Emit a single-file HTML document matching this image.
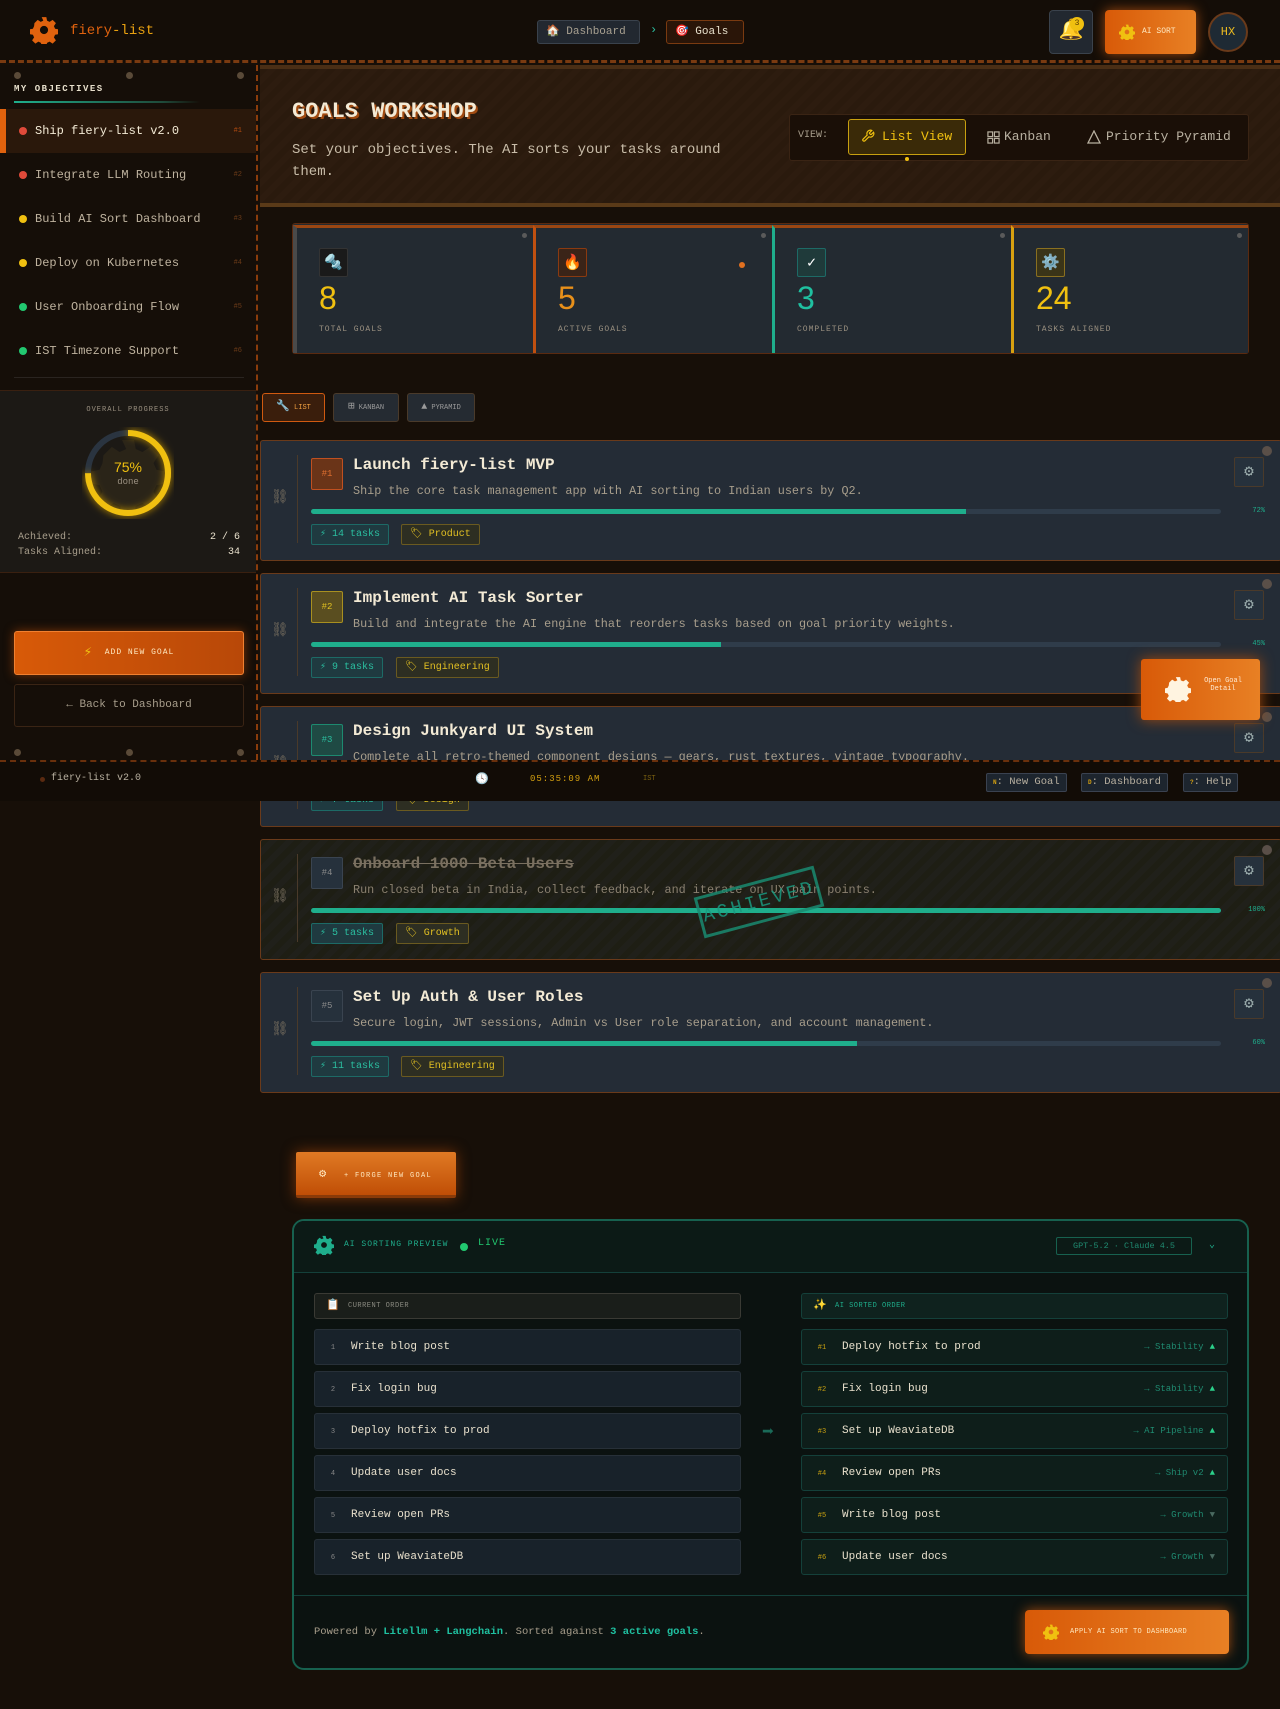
<!DOCTYPE html>
<html><head><meta charset="utf-8">
<style>
*{box-sizing:border-box;margin:0;padding:0}
body{width:1280px;height:1709px;position:relative;overflow:hidden;background:#170f08;font-family:"Liberation Mono","DejaVu Sans Mono",monospace;color:#d8cdb8}
.a{position:absolute;white-space:nowrap}
.hdr{left:0;top:0;width:1280px;height:63px;background:#140d07;border-bottom:3px dashed #7a3a10}
.crumb{height:24px;top:20px;border-radius:3px;font-size:11px;line-height:22px;padding:0 8px}
.side{left:0;top:65px;width:258px;height:695px;background:#150e08;border-right:2px dashed #8a3c0c}
.rv{width:7px;height:7px;border-radius:50%;background:#5a4a38}
.item{left:0;width:256px;height:44px;font-size:12px;line-height:44px;padding-left:35px;color:#bfb39f}
.item .d{position:absolute;left:19px;top:18px;width:8px;height:8px;border-radius:50%}
.item .n{position:absolute;right:14px;top:0;font-size:7px;color:#6a3a18}
.hero{left:260px;top:65px;width:1020px;height:142px;background:repeating-linear-gradient(135deg,#2a1a0d 0 6px,#2d1c0f 6px 12px);border-top:4px solid #4a2e15;border-bottom:4px solid #5a3a18}
.stat{top:225px;height:128px;background:#232a31;border-top:3px solid #9a4612}
.stat .ic{position:absolute;left:22px;top:20px;width:29px;height:29px;border-radius:2px;font-size:15px;text-align:center;line-height:29px}
.stat .v{position:absolute;left:22px;top:52px;font-size:32px;font-family:"Liberation Sans",sans-serif}
.stat .l{position:absolute;left:22px;top:97px;font-size:8px;letter-spacing:1px;color:#9a9080}
.stat .r{position:absolute;right:6px;top:5px;width:5px;height:5px;border-radius:50%;background:#5a5a5a}
.tab{top:393px;height:29px;border-radius:3px;font-size:7px;line-height:27px;text-align:center;background:#252b32;border:1px solid #4a3a2a;color:#9a9a9a}
.card{left:260px;width:1022px;height:121px;background:#242c36;border:1px solid #6a3a1a;border-radius:3px}
.card .ch{position:absolute;left:10px;top:48px;font-size:14px;color:#7a7060}
.card .vl{position:absolute;left:36px;top:14px;width:1px;height:88px;background:#4a3a2a}
.card .bd{position:absolute;left:50px;top:17px;width:32px;height:32px;border-radius:2px;font-size:9px;text-align:center;line-height:30px}
.card .t{position:absolute;left:92px;top:15px;font-size:16px;font-weight:bold;color:#f3ead5}
.card .ds{position:absolute;left:92px;top:43px;font-size:11.8px;color:#a89e8c}
.card .pb{position:absolute;left:50px;top:68px;width:910px;height:5px;background:#2f3c4a;border-radius:3px;overflow:hidden}
.card .pb i{display:block;height:5px;background:#1fae8c}
.card .pc{position:absolute;right:16px;top:66px;font-size:7px;color:#1fae8c}
.card .tg{position:absolute;top:83px;height:21px;font-size:10px;line-height:19px;padding:0 8px;border-radius:2px}
.tg.k{left:50px;border:1px solid #1d6a66;background:#1f3a40;color:#2bbfa0}
.tg.c{border:1px solid #6a5a20;background:#2d2e22;color:#e2c022}
.card .gb{position:absolute;left:973px;top:16px;width:30px;height:30px;border:1px solid #4a3a2a;background:#26313c;border-radius:2px;color:#9aa;text-align:center;line-height:28px;font-size:16px}
.card .rt{position:absolute;left:1001px;top:5px;width:10px;height:10px;border-radius:50%;background:#5a4f48}
.ft{left:0;top:760px;width:1280px;height:41px;background:#120c06;border-top:2px dashed #6a300c}
.kb{top:11px;height:19px;font-size:10.5px;line-height:17px;padding:0 6px;background:#1d252e;border:1px solid #3a4250;border-radius:2px;color:#b8b0a0}
.kb b{color:#d4a010;font-size:6px}
.ai{left:292px;top:1219px;width:957px;height:451px;background:#0b1210;border:2px solid #17614f;border-radius:12px;overflow:hidden}
.row{height:36px;border-radius:3px;font-size:11px;line-height:34px}
.row.l{background:#18222a;border:1px solid #273038;color:#e8e0cc}
.row.r{background:#0e1e1a;border:1px solid #14403a;color:#e8e0cc}
.row .n{display:inline-block;width:36px;text-align:center;font-size:7px;color:#888}
.row.r .n{color:#c8a010;width:40px}
.row .tg2{position:absolute;right:12px;top:0;font-size:9px;color:#1f8a70}
.row .tg2 b{color:#2bd08a;margin-left:6px;font-size:9px}
</style></head><body>
<svg width="0" height="0" style="position:absolute"><defs><path id="g" d="M10 1h4l.6 3 2.2 1 2.6-1.7 2.8 2.8-1.7 2.6 1 2.2 3 .6v4l-3 .6-1 2.2 1.7 2.6-2.8 2.8-2.6-1.7-2.2 1-.6 3h-4l-.6-3-2.2-1-2.6 1.7-2.8-2.8 1.7-2.6-1-2.2-3-.6v-4l3-.6 1-2.2L3.8 6.1l2.8-2.8 2.6 1.7 2.2-1z"/></defs></svg>

<div class="a hdr">
  <svg class="a" style="left:30px;top:16px" width="28" height="28" viewBox="0 0 24 24"><use href="#g" fill="#e0620e"/><circle cx="12" cy="12" r="3.5" fill="#140d07"/></svg>
  <div class="a" style="left:70px;top:23px;font-size:14px;color:#e0620e">fiery<span style="color:#e8a010">-list</span></div>
  <div class="a crumb" style="left:537px;width:103px;background:#222830;border:1px solid #3a424c;color:#a8a090"><span style="font-size:11px">🏠</span> Dashboard</div>
  <div class="a" style="left:650px;top:23px;font-size:12px;color:#2bbfa0">›</div>
  <div class="a crumb" style="left:666px;width:78px;background:#2a1508;border:1px solid #7a3a10;color:#e8e0cc"><span style="font-size:11px">🎯</span> Goals</div>
  <div class="a" style="left:1049px;top:10px;width:44px;height:44px;background:#222830;border:1px solid #3a424c;border-radius:4px;font-size:20px;text-align:center;line-height:42px">🔔</div>
  <div class="a" style="left:1070px;top:17px;width:14px;height:14px;border-radius:50%;background:#f0c010;font-size:8px;color:#5a3a00;text-align:center;line-height:14px">3</div>
  <div class="a" style="left:1105px;top:10px;width:91px;height:44px;background:linear-gradient(90deg,#d85a08,#e88024);border-radius:4px;box-shadow:0 0 12px #a04a10;font-size:8px;color:#ffe8c0;line-height:44px;padding-left:37px">AI SORT</div>
  <svg class="a" style="left:1119px;top:24px" width="16" height="16" viewBox="0 0 24 24"><use href="#g" fill="#f0c010"/><circle cx="12" cy="12" r="3.5" fill="#e07018"/></svg>
  <div class="a" style="left:1208px;top:12px;width:40px;height:40px;border-radius:50%;background:#1e2a34;border:2px solid #6a3a1a;color:#e8b820;font-size:12px;text-align:center;line-height:36px">HX</div>
</div>

<div class="a side">
  <div class="a rv" style="left:14px;top:7px"></div><div class="a rv" style="left:126px;top:7px"></div><div class="a rv" style="left:237px;top:7px"></div>
  <div class="a" style="left:14px;top:19px;font-size:9px;font-weight:bold;letter-spacing:1.5px;color:#e8e0cc">MY OBJECTIVES</div>
  <div class="a" style="left:14px;top:36px;width:186px;height:2px;background:linear-gradient(90deg,#1fae8c,#1f4a3a 80%,transparent)"></div>
  <div class="a item" style="top:44px;background:#2a180b;color:#f3ead5;border-left:6px solid #e0620e;padding-left:29px"><span class="d" style="background:#e04a3a;left:13px"></span>Ship fiery-list v2.0<span class="n" style="color:#b04a10">#1</span></div>
  <div class="a item" style="top:88px"><span class="d" style="background:#e04a3a"></span>Integrate LLM Routing<span class="n">#2</span></div>
  <div class="a item" style="top:132px"><span class="d" style="background:#f0c010"></span>Build AI Sort Dashboard<span class="n">#3</span></div>
  <div class="a item" style="top:176px"><span class="d" style="background:#f0c010"></span>Deploy on Kubernetes<span class="n">#4</span></div>
  <div class="a item" style="top:220px"><span class="d" style="background:#22c870"></span>User Onboarding Flow<span class="n">#5</span></div>
  <div class="a item" style="top:264px"><span class="d" style="background:#22c870"></span>IST Timezone Support<span class="n">#6</span></div>
  <div class="a" style="left:14px;top:312px;width:230px;height:1px;background:#2a2420"></div>
  <div class="a" style="left:0;top:325px;width:256px;height:183px;background:#1c1915;border-top:1px solid #3a2010;border-bottom:1px solid #3a2010">
    <div class="a" style="left:0;width:256px;top:15px;text-align:center;font-size:7px;letter-spacing:1px;color:#9a9080">OVERALL PROGRESS</div>
    <svg class="a" style="left:82px;top:36px" width="92" height="92" viewBox="0 0 92 92"><g transform="translate(46 46) scale(3) translate(-12 -12)"><use href="#g" fill="#2a2418"/></g><circle cx="46" cy="46" r="40" fill="none" stroke="#2a3440" stroke-width="6"/><circle cx="46" cy="46" r="40" fill="none" stroke="#f0c010" stroke-width="6" stroke-dasharray="188 252" transform="rotate(-90 46 46)" style="filter:drop-shadow(0 0 4px #c09000)"/></svg>
    <div class="a" style="left:0;width:256px;top:68px;text-align:center;font-size:14px;color:#f0c010;font-family:'Liberation Sans',sans-serif">75%</div>
    <div class="a" style="left:0;width:256px;top:86px;text-align:center;font-size:9px;color:#9a9080">done</div>
    <div class="a" style="left:18px;top:141px;font-size:10px;color:#a89e8c">Achieved:</div><div class="a" style="right:16px;top:141px;font-size:10px;color:#e8e0cc">2 / 6</div>
    <div class="a" style="left:18px;top:156px;font-size:10px;color:#a89e8c">Tasks Aligned:</div><div class="a" style="right:16px;top:156px;font-size:10px;color:#e8e0cc">34</div>
  </div>
  <div class="a" style="left:14px;top:566px;width:230px;height:44px;background:linear-gradient(90deg,#d85a08,#b84808);border:1px solid #f08030;border-radius:3px;box-shadow:0 0 10px #7a3408;font-size:8px;letter-spacing:1px;color:#ffe8c0;text-align:center;line-height:42px"><span style="color:#f0c010;font-size:14px;vertical-align:-2px">⚡</span>&nbsp;&nbsp;ADD NEW GOAL</div>
  <div class="a" style="left:14px;top:619px;width:230px;height:43px;border:1px solid #3a2414;border-radius:3px;font-size:11px;color:#a89e8c;text-align:center;line-height:41px">← Back to Dashboard</div>
  <div class="a rv" style="left:14px;top:684px"></div><div class="a rv" style="left:126px;top:684px"></div><div class="a rv" style="left:237px;top:684px"></div>
</div>

<div class="a hero">
  <div class="a" style="left:32px;top:30px;font-size:22px;font-weight:bold;color:#f3ead5;text-shadow:2px 2px 0 #a04a10">GOALS WORKSHOP</div>
  <div class="a" style="left:32px;top:70px;width:460px;font-size:14px;line-height:22px;color:#c8bca8;white-space:normal">Set your objectives. The AI sorts your tasks around them.</div>
  <div class="a" style="left:529px;top:45px;width:460px;height:47px;background:#1a0f07;border:1px solid #3a2414;border-radius:3px">
    <div class="a" style="left:8px;top:15px;font-size:10px;color:#a89e8c">VIEW:</div>
    <div class="a" style="left:58px;top:4px;width:118px;height:36px;background:#3a2a08;border:1px solid #c8a010;border-radius:3px;color:#f0c010;font-size:13px;line-height:34px;padding-left:33px">List View</div>
    <svg class="a" style="left:71px;top:14px" width="14" height="14" viewBox="0 0 24 24" fill="none" stroke="#f0c010" stroke-width="2"><path d="M14.7 6.3a1 1 0 0 0 0 1.4l1.6 1.6a1 1 0 0 0 1.4 0l3.8-3.8a6 6 0 0 1-7.9 7.9l-6.9 6.9a2.1 2.1 0 0 1-3-3l6.9-6.9a6 6 0 0 1 7.9-7.9z"/></svg>
    <div class="a" style="left:115px;top:42px;width:4px;height:4px;border-radius:50%;background:#f0c010"></div>
    <svg class="a" style="left:197px;top:16px" width="13" height="13" viewBox="0 0 14 14" fill="none" stroke="#b8b0a0" stroke-width="1.3"><rect x="1" y="1" width="5" height="5"/><rect x="8" y="1" width="5" height="5"/><rect x="1" y="8" width="5" height="5"/><rect x="8" y="8" width="5" height="5"/></svg>
    <div class="a" style="left:214px;top:14px;font-size:13px;color:#b8b0a0">Kanban</div>
    <svg class="a" style="left:297px;top:15px" width="14" height="14" viewBox="0 0 14 14" fill="none" stroke="#b8b0a0" stroke-width="1.3"><path d="M7 1L13 13H1z"/></svg>
    <div class="a" style="left:316px;top:14px;font-size:13px;color:#b8b0a0">Priority Pyramid</div>
  </div>
</div>

<div class="a" style="left:292px;top:223px;width:957px;height:131px;border:1px solid #5a2a10;border-radius:3px;background:#232a31"></div>
<div class="a stat" style="left:293px;width:240px;border-left:4px solid #4a4a4a"><div class="ic" style="background:#1a1a1a;border:1px solid #333">🔩</div><div class="v" style="color:#f0c010">8</div><div class="l">TOTAL GOALS</div><div class="r"></div></div>
<div class="a stat" style="left:533px;width:239px;border-left:3px solid #c05010"><div class="ic" style="background:#3a2418;border:1px solid #8a3a10">🔥</div><div class="v" style="color:#e8901a">5</div><div class="l">ACTIVE GOALS</div><div class="r"></div><div class="a" style="left:203px;top:34px;width:6px;height:6px;border-radius:50%;background:#e07020"></div></div>
<div class="a stat" style="left:772px;width:239px;border-left:3px solid #1fae8c"><div class="ic" style="background:#1f3a3a;border:1px solid #1d6a66;color:#fff">✓</div><div class="v" style="color:#1fc0a0">3</div><div class="l">COMPLETED</div><div class="r"></div></div>
<div class="a stat" style="left:1011px;width:237px;border-left:3px solid #d8a010"><div class="ic" style="background:#3a3418;border:1px solid #8a7020">⚙️</div><div class="v" style="color:#f0c010">24</div><div class="l">TASKS ALIGNED</div><div class="r"></div></div>

<div class="a tab" style="left:262px;width:63px;background:#3a1e0c;border-color:#d05a10;color:#f0a040"><span style="font-size:11px">🔧</span>&nbsp;LIST</div>
<div class="a tab" style="left:333px;width:66px"><span style="font-size:11px">⊞</span>&nbsp;KANBAN</div>
<div class="a tab" style="left:407px;width:68px"><span style="font-size:10px">▲</span>&nbsp;PYRAMID</div>

<div class="a card" style="top:440px"><span class="ch">⛓</span><span class="vl"></span><div class="bd" style="background:#6a3418;border:1px solid #c05020;color:#e07030">#1</div><div class="t">Launch fiery-list MVP</div><div class="ds">Ship the core task management app with AI sorting to Indian users by Q2.</div><div class="pb"><i style="width:72%"></i></div><div class="pc">72%</div><div class="tg k">⚡ 14 tasks</div><div class="tg c" style="left:140px">🏷 Product</div><div class="gb">⚙</div><div class="rt"></div></div>
<div class="a card" style="top:573px"><span class="ch">⛓</span><span class="vl"></span><div class="bd" style="background:#5a4e20;border:1px solid #a89020;color:#e0c020">#2</div><div class="t">Implement AI Task Sorter</div><div class="ds">Build and integrate the AI engine that reorders tasks based on goal priority weights.</div><div class="pb"><i style="width:45%"></i></div><div class="pc">45%</div><div class="tg k">⚡ 9 tasks</div><div class="tg c" style="left:135px">🏷 Engineering</div><div class="gb">⚙</div><div class="rt"></div></div>
<div class="a card" style="top:706px"><span class="ch">⛓</span><span class="vl"></span><div class="bd" style="background:#1f4a44;border:1px solid #1d8a70;color:#2bbfa0">#3</div><div class="t">Design Junkyard UI System</div><div class="ds">Complete all retro-themed component designs — gears, rust textures, vintage typography.</div><div class="pb"><i style="width:30%"></i></div><div class="tg k">⚡ 7 tasks</div><div class="tg c" style="left:135px">🏷 Design</div><div class="gb">⚙</div><div class="rt"></div></div>
<div class="a card" style="top:839px;background:repeating-linear-gradient(135deg,#1e1e14 0 6px,#20201a 6px 12px)"><span class="ch">⛓</span><span class="vl"></span><div class="bd" style="background:#26313c;border:1px solid #3a4450;color:#8a8a8a">#4</div><div class="t" style="color:#7a7060;text-decoration:line-through">Onboard 1000 Beta Users</div><div class="ds" style="color:#8a8070">Run closed beta in India, collect feedback, and iterate on UX pain points.</div><div class="pb"><i style="width:100%"></i></div><div class="pc">100%</div><div class="tg k">⚡ 5 tasks</div><div class="tg c" style="left:135px">🏷 Growth</div><div class="gb">⚙</div><div class="rt"></div>
  <div class="a" style="left:436px;top:41px;width:124px;height:42px;border:3px solid #1a8a70;color:#1a9a80;font-size:19px;letter-spacing:3px;text-align:center;line-height:36px;transform:rotate(-15deg);opacity:.85">ACHIEVED</div></div>
<div class="a card" style="top:972px"><span class="ch">⛓</span><span class="vl"></span><div class="bd" style="background:#26313c;border:1px solid #3a4450;color:#8a8a8a">#5</div><div class="t">Set Up Auth &amp; User Roles</div><div class="ds">Secure login, JWT sessions, Admin vs User role separation, and account management.</div><div class="pb"><i style="width:60%"></i></div><div class="pc">60%</div><div class="tg k">⚡ 11 tasks</div><div class="tg c" style="left:140px">🏷 Engineering</div><div class="gb">⚙</div><div class="rt"></div></div>

<div class="a" style="left:1141px;top:659px;width:119px;height:61px;background:linear-gradient(90deg,#d85a08,#e88024);border-radius:3px;box-shadow:0 0 14px #a04a10">
  <svg class="a" style="left:24px;top:17px" width="26" height="26" viewBox="0 0 24 24"><use href="#g" fill="#fff4e0"/></svg>
  <div class="a" style="left:60px;top:18px;width:44px;text-align:center;font-size:7px;line-height:8px;color:#ffe8d0;white-space:normal">Open Goal Detail</div>
</div>

<div class="a ft">
  <div class="a" style="left:40px;top:15px;width:5px;height:5px;border-radius:50%;background:#5a2a10"></div>
  <div class="a" style="left:51px;top:11px;font-size:10px;color:#b8b0a0">fiery-list v2.0</div>
  <div class="a" style="left:475px;top:10px;font-size:11px">🕓</div>
  <div class="a" style="left:530px;top:12px;font-size:9px;color:#d4a010;letter-spacing:1px">05:35:09 AM</div>
  <div class="a" style="left:643px;top:13px;font-size:7px;color:#7a6010">IST</div>
  <div class="a kb" style="left:986px"><b>N</b>: New Goal</div>
  <div class="a kb" style="left:1081px"><b>D</b>: Dashboard</div>
  <div class="a kb" style="left:1183px"><b>?</b>: Help</div>
</div>

<div class="a" style="left:296px;top:1152px;width:160px;height:46px;background:linear-gradient(180deg,#e07a24,#c04e06);border-bottom:3px solid #8a3a08;border-radius:2px;box-shadow:0 0 14px #7a3408;font-size:7px;letter-spacing:1.3px;color:#ffe8c0;line-height:44px;padding-left:23px"><span style="font-size:12px">⚙</span>&nbsp;&nbsp;&nbsp;+ FORGE NEW GOAL</div>

<div class="a ai">
  <div class="a" style="left:0;top:0;width:957px;height:52px;background:#0c1a16;border-bottom:1px solid #14403a"></div>
  <svg class="a" style="left:20px;top:14px" width="20" height="20" viewBox="0 0 24 24"><use href="#g" fill="#1fae8c"/><circle cx="12" cy="12" r="3.5" fill="#0c1a16"/></svg>
  <div class="a" style="left:50px;top:19px;font-size:8px;letter-spacing:1px;color:#1fae8c">AI SORTING PREVIEW</div>
  <div class="a" style="left:166px;top:22px;width:8px;height:8px;border-radius:50%;background:#22c870"></div>
  <div class="a" style="left:184px;top:17px;font-size:10px;color:#22c870;letter-spacing:1px">LIVE</div>
  <div class="a" style="left:762px;top:16px;width:136px;height:18px;border:1px solid #17614f;border-radius:2px;font-size:8.5px;color:#1f8a70;text-align:center;line-height:16px">GPT-5.2 · Claude 4.5</div>
  <div class="a" style="left:915px;top:18px;font-size:10px;color:#1fae8c">⌄</div>

  <div class="a" style="left:20px;top:72px;width:427px;height:26px;background:#1a1e1a;border:1px solid #3a3a34;border-radius:3px;font-size:7px;color:#8a8a80;line-height:24px;padding-left:33px;letter-spacing:.5px">CURRENT ORDER</div>
  <div class="a" style="left:32px;top:77px;font-size:11px">📋</div>
  <div class="a row l" style="left:20px;top:108px;width:427px"><span class="n">1</span>Write blog post</div>
  <div class="a row l" style="left:20px;top:150px;width:427px"><span class="n">2</span>Fix login bug</div>
  <div class="a row l" style="left:20px;top:192px;width:427px"><span class="n">3</span>Deploy hotfix to prod</div>
  <div class="a row l" style="left:20px;top:234px;width:427px"><span class="n">4</span>Update user docs</div>
  <div class="a row l" style="left:20px;top:276px;width:427px"><span class="n">5</span>Review open PRs</div>
  <div class="a row l" style="left:20px;top:318px;width:427px"><span class="n">6</span>Set up WeaviateDB</div>

  <div class="a" style="left:468px;top:198px;font-size:20px;color:#1a6a58">➡</div>

  <div class="a" style="left:507px;top:72px;width:427px;height:26px;background:#0f221e;border:1px solid #14403a;border-radius:3px;font-size:7px;color:#1fae8c;line-height:24px;padding-left:33px;letter-spacing:.5px">AI SORTED ORDER</div>
  <div class="a" style="left:519px;top:77px;font-size:11px">✨</div>
  <div class="a row r" style="left:507px;top:108px;width:427px"><span class="n">#1</span>Deploy hotfix to prod<span class="tg2">→ Stability<b>▲</b></span></div>
  <div class="a row r" style="left:507px;top:150px;width:427px"><span class="n">#2</span>Fix login bug<span class="tg2">→ Stability<b>▲</b></span></div>
  <div class="a row r" style="left:507px;top:192px;width:427px"><span class="n">#3</span>Set up WeaviateDB<span class="tg2">→ AI Pipeline<b>▲</b></span></div>
  <div class="a row r" style="left:507px;top:234px;width:427px"><span class="n">#4</span>Review open PRs<span class="tg2">→ Ship v2<b>▲</b></span></div>
  <div class="a row r" style="left:507px;top:276px;width:427px"><span class="n">#5</span>Write blog post<span class="tg2">→ Growth<b style="color:#4a6a60">▼</b></span></div>
  <div class="a row r" style="left:507px;top:318px;width:427px"><span class="n">#6</span>Update user docs<span class="tg2">→ Growth<b style="color:#4a6a60">▼</b></span></div>

  <div class="a" style="left:0;top:374px;width:957px;height:1px;background:#14403a"></div>
  <div class="a" style="left:20px;top:405px;font-size:10.5px;color:#a89e8c">Powered by <b style="color:#1fc0a0">Litellm + Langchain</b>. Sorted against <b style="color:#1fc0a0">3 active goals</b>.</div>
  <div class="a" style="left:731px;top:389px;width:204px;height:44px;background:linear-gradient(90deg,#d85a08,#e88024);border-radius:4px;box-shadow:0 0 12px #a04a10;font-size:7px;color:#ffe8c0;line-height:44px;padding-left:45px;letter-spacing:.3px">APPLY AI SORT TO DASHBOARD</div>
  <svg class="a" style="left:749px;top:403px" width="16" height="16" viewBox="0 0 24 24"><use href="#g" fill="#f0c010"/><circle cx="12" cy="12" r="3.5" fill="#e07018"/></svg>
</div>
</body></html>
